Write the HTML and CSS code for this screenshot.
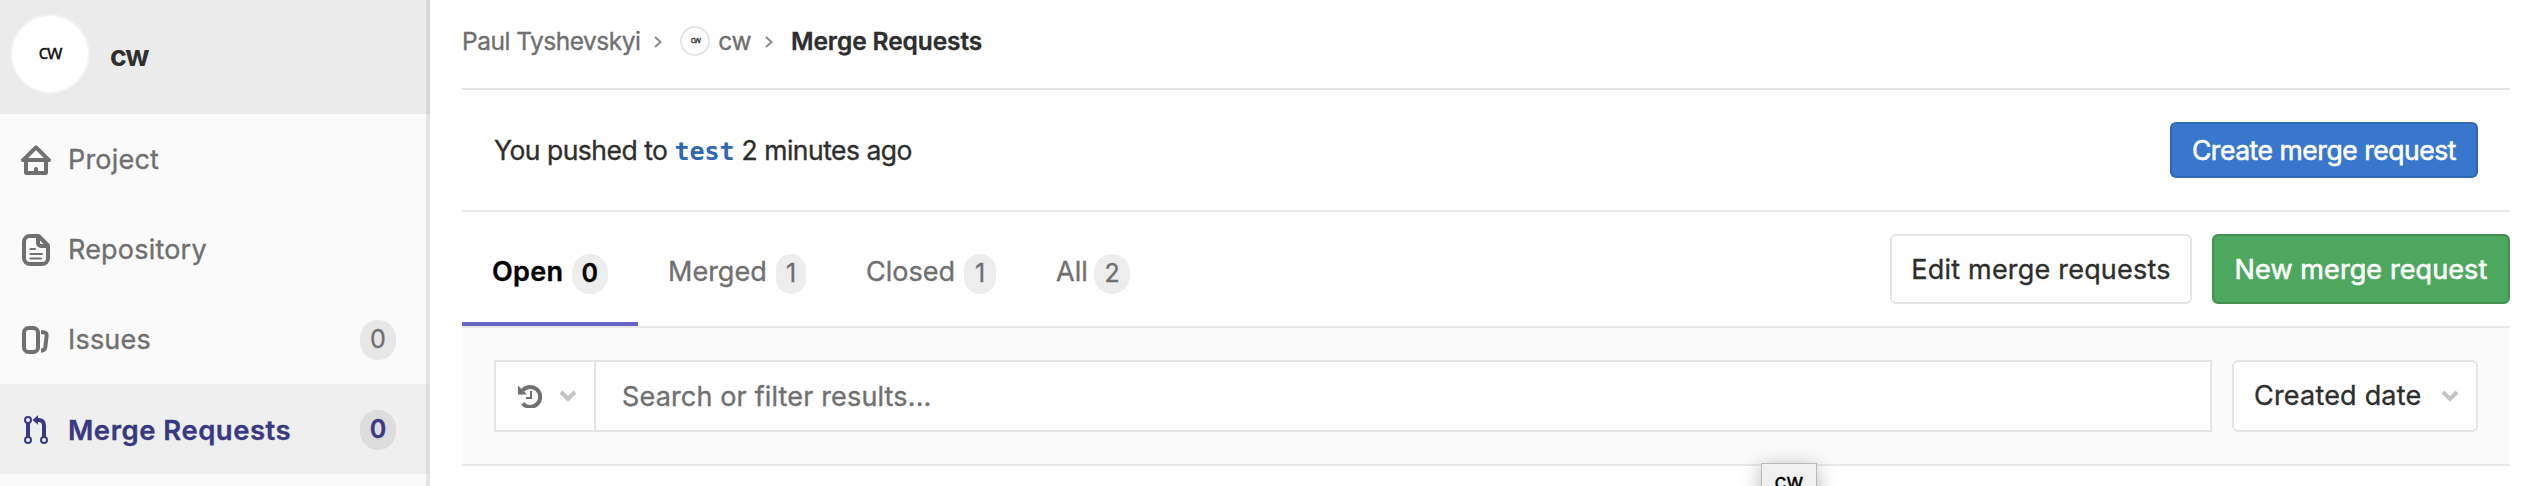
FILE: index.html
```html
<!DOCTYPE html>
<html lang="en">
<head>
<meta charset="utf-8">
<title>Merge Requests · cw</title>
<link rel="stylesheet" href="styles.css">
</head>
<body>
<div class="layout">
  <aside class="sidebar">
    <a class="context">
      <span class="avatar">cw</span>
      <span class="context-title">cw</span>
    </a>
    <nav class="nav">
      <a class="nav-item">
        <svg class="nav-icon" viewBox="0 0 32 32" fill="none" stroke="currentColor" stroke-width="4" stroke-linejoin="round" stroke-linecap="round"><path d="M3.2 16.2 16 3.4l12.800 12.800M3 16h26"/><path d="M6 17v11.200a.8.8 0 0 0 .8.800h18.400a.8.8 0 0 0 .8-.800V17"/><path d="M14 29v-4a2 2 0 0 1 4 0v4z" fill="currentColor" stroke="none"/></svg>
        <span class="nav-label project">Project</span>
      </a>
      <a class="nav-item">
        <svg class="nav-icon" viewBox="0 0 32 32" fill="none" stroke="currentColor" stroke-width="4"><path d="M18.500 2H10a6 6 0 0 0-6 6v16a6 6 0 0 0 6 6h12a6 6 0 0 0 6-6V11.500L18.500 2z" stroke-linejoin="round"/><path d="M18 2v7a3 3 0 0 0 3 3h7"/><path d="M10.500 15H15M10.500 20h11.500M10.500 24.500H21" stroke-width="2" stroke-linecap="round"/></svg>
        <span class="nav-label repository">Repository</span>
      </a>
      <a class="nav-item">
        <svg class="nav-icon" viewBox="0 0 32 32" fill="none" stroke="currentColor" stroke-width="4"><rect x="4" y="4" width="14" height="24" rx="4.500"/><path d="M21 8.200h2.400c2.200 0 3.400 1.400 3.200 3.400l-1.300 11.600c-.3 2.200-1.500 3.200-4.300 3.500"/></svg>
        <span class="nav-label issues">Issues</span>
        <span class="badge">0</span>
      </a>
      <a class="nav-item active">
        <svg class="nav-icon" viewBox="0 0 32 32" fill="none" stroke="currentColor"><circle cx="8" cy="6" r="3" stroke-width="2"/><circle cx="8" cy="26" r="3" stroke-width="2"/><circle cx="24" cy="26" r="3" stroke-width="2"/><path d="M8 9v14M24 23V11.500c0-3.500-2-5.500-5.500-5.500H17" stroke-width="4"/><path d="M12.500 6 18 1.200v9.600z" fill="currentColor" stroke="none"/></svg>
        <span class="nav-label requests">Merge Requests</span>
        <span class="badge">0</span>
      </a>
    </nav>
  </aside>
  <main class="content">
    <nav class="breadcrumbs">
      <a class="crumb owner">Paul Tyshevskyi</a>
      <svg class="separator" viewBox="0 0 10 14"><path d="M2 2l5.500 5L2 12"/></svg>
      <a class="crumb crumb-project"><span class="mini-avatar">cw</span>cw</a>
      <svg class="separator" viewBox="0 0 10 14"><path d="M2 2l5.500 5L2 12"/></svg>
      <span class="crumb-current">Merge Requests</span>
    </nav>
    <section class="push-event">
      <p class="push-text">You pushed to <a class="branch">test</a> 2 minutes ago</p>
      <button class="btn btn-blue">Create merge request</button>
    </section>
    <section class="toolbar">
      <div class="tabs">
        <a class="tab current"><span class="tab-label">Open</span><span class="badge tab-badge">0</span></a>
        <a class="tab merged"><span class="tab-label">Merged</span><span class="badge tab-badge">1</span></a>
        <a class="tab closed"><span class="tab-label">Closed</span><span class="badge tab-badge">1</span></a>
        <a class="tab all"><span class="tab-label">All</span><span class="badge tab-badge">2</span></a>
      </div>
      <div class="actions">
        <button class="btn btn-plain">Edit merge requests</button>
        <button class="btn btn-green">New merge request</button>
      </div>
    </section>
    <section class="filters">
      <div class="search">
        <button class="history">
          <svg class="history-icon" viewBox="0 0 24 24" fill="none" stroke="currentColor"><path d="M4.500 6.500A10 10 0 1 1 4.700 19.500" stroke-width="4"/><path d="M0 1.500v9h9z" fill="currentColor" stroke="none"/><path d="M13 7v7H8" stroke-width="2"/></svg>
          <svg class="chevron" viewBox="0 0 18 12"><path d="M2 2l7 7 7-7"/></svg>
        </button>
        <span class="placeholder">Search or filter results...</span>
      </div>
      <button class="sort"><span>Created date</span><svg class="chevron" viewBox="0 0 18 12"><path d="M2 2l7 7 7-7"/></svg></button>
    </section>
  </main>
  <div class="tooltip">cw</div>
</div>
</body>
</html>
```
FILE: styles.css
```css
* { box-sizing: border-box; }
body {
  margin: 0;
  height: 486px;
  overflow: hidden;
  background: #fff;
  color: #2e2e2e;
  font-family: Inter, "Liberation Sans", sans-serif;
  font-size: 27px;
  line-height: 40px;
  white-space: nowrap;
  -webkit-text-stroke: .35px;
}
button { font: inherit; color: inherit; padding: 0; margin: 0; }
svg { display: block; flex: none; }
.layout { position: relative; display: flex; height: 486px; overflow: hidden; }

.sidebar {
  width: 430px;
  flex: none;
  background: #fafafa;
  box-shadow: inset -4px 0 0 #e5e5e5;
}
.context {
  display: flex;
  align-items: center;
  height: 114px;
  padding: 0 0 6px 10px;
  background: #ebebeb;
  box-shadow: inset -4px 0 0 #d7d7d7;
}
.avatar {
  width: 80px;
  height: 80px;
  border: 2px solid #f2f2f2;
  border-radius: 50%;
  background: #fff;
  color: #111;
  font-family: "Open Sans", sans-serif;
  font-size: 20px;
  letter-spacing: -1px;
  line-height: 72px;
  text-align: center;
}
.context-title { margin: 4px 0 0 20px; font-size: 28.500px; font-weight: 700; letter-spacing: -1.200px; -webkit-text-stroke: 0; }
.nav-item {
  display: flex;
  align-items: center;
  height: 90px;
  padding: 2px 34px 0 20px;
  color: #707070;
}
.nav-icon { width: 32px; height: 32px; margin-right: 16px; }
.nav-label { flex: 1; letter-spacing: .2px; }
.requests { font-size: 27.500px; letter-spacing: .5px; }
.active {
  background: #efefef;
  box-shadow: inset -4px 0 0 #dcdcdc;
  color: #393982;
  font-weight: 600;
}
.badge {
  width: 36px;
  height: 40px;
  border-radius: 20px;
  background: #e7e7e7;
  font-size: 25px;
  line-height: 39px;
  text-align: center;
}
.active .badge { background: #dddddd; }

.content { width: 2048px; margin-left: 32px; }
.breadcrumbs {
  display: flex;
  align-items: center;
  height: 90px;
  padding-bottom: 6px;
  border-bottom: 2px solid #e5e5e5;
  color: #707070;
  font-size: 24.500px;
  letter-spacing: -.5px;
}
.separator { width: 10px; height: 14px; margin: 2px 17px 0 13px; fill: none; stroke: #8c8c8c; stroke-width: 2; }
.crumb-project { display: flex; align-items: center; }
.mini-avatar {
  width: 30px;
  height: 30px;
  margin-right: 8px;
  border: 2px solid #e6e6e6;
  border-radius: 50%;
  color: #333;
  font-family: "Open Sans", sans-serif;
  font-size: 9px;
  letter-spacing: -1px;
  line-height: 24px;
  text-align: center;
}
.crumb-current { color: #2e2e2e; font-weight: 600; letter-spacing: -.1px; }

.push-event {
  display: flex;
  align-items: center;
  justify-content: space-between;
  height: 122px;
  padding: 0 32px;
  border-bottom: 2px solid #e8e8e8;
}
.push-text { margin: 0; padding-top: 2px; font-size: 26.500px; letter-spacing: -.5px; }
.branch { color: #2f67b2; font-family: "DejaVu Sans Mono", monospace; font-size: 25px; font-weight: 700; letter-spacing: 0; -webkit-text-stroke: 0; }
.btn { border: 2px solid #e5e5e5; border-radius: 6px; padding-top: 2px; text-align: center; }
.btn-blue { width: 308px; height: 56px; padding-top: 0; border-color: #2f68b4; background: #3877cb; color: #fff; font-size: 26.500px; letter-spacing: -.45px; -webkit-text-stroke: .6px; }
.btn-plain { width: 302px; height: 70px; background: #fff; letter-spacing: .2px; }
.btn-green { width: 298px; height: 70px; border-color: #429150; background: #4ea75f; color: #fff; letter-spacing: .1px; -webkit-text-stroke: .6px; }

.toolbar { display: flex; justify-content: space-between; height: 116px; border-bottom: 2px solid #e8e8e8; }
.tabs { display: flex; color: #707070; }
.tab { display: flex; align-items: center; justify-content: space-between; height: 114px; padding: 18px 30px 4px; border-bottom: 4px solid transparent; }
.tab-label { padding-bottom: 4px; }
.tab-badge { background: #ededed; }
.current { width: 176px; border-color: #6666c4; color: #000; font-weight: 600; letter-spacing: .3px; }
.merged { width: 198px; }
.closed { width: 190px; }
.all { width: 134px; }
.merged .badge { width: 30px; }
.closed .badge { width: 32px; }
.actions { display: flex; gap: 20px; padding-top: 22px; }

.filters {
  display: flex;
  gap: 20px;
  height: 138px;
  padding: 32px 32px 0;
  border-bottom: 2px solid #e8e8e8;
  background: #fafafa;
}
.search { display: flex; align-items: center; width: 1718px; height: 72px; border: 2px solid #e5e5e5; background: #fff; }
.history { display: flex; align-items: center; width: 100px; height: 68px; padding-left: 22px; border: 0; border-right: 2px solid #e5e5e5; background: #fff; color: #707070; }
.history-icon { width: 24px; height: 24px; margin-right: 17px; }
.chevron { width: 18px; height: 12px; fill: none; stroke: #c4c4c4; stroke-width: 4; }
.placeholder { padding: 1px 0 0 26px; color: #707070; letter-spacing: .15px; }
.sort { display: flex; align-items: center; justify-content: space-between; width: 246px; height: 72px; padding: 0 17px 0 20px; border: 2px solid #e5e5e5; border-radius: 6px; background: #fff; letter-spacing: .2px; }

.tooltip {
  position: absolute;
  left: 1761px;
  top: 463px;
  width: 56px;
  height: 40px;
  border: 1px solid #b9b9b9;
  background: #f0f0f0;
  box-shadow: 0 4px 20px rgba(0, 0, 0, .3);
  color: #000;
  font-size: 21px;
  line-height: 36px;
  text-align: center;
}
```
